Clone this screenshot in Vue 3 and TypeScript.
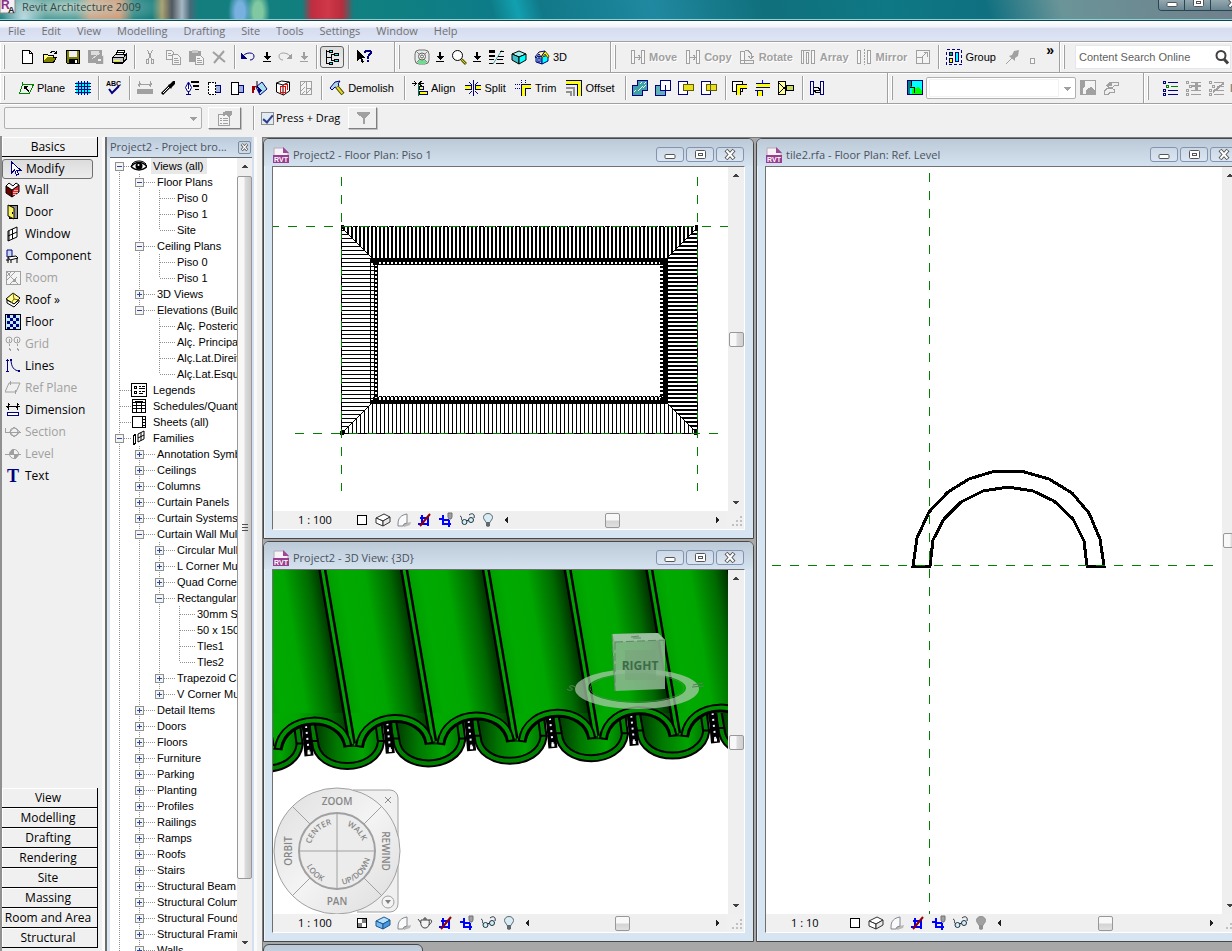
<script setup lang="ts">
import { h, ref, type FunctionalComponent } from 'vue'

const K = '#000000'
const G = '#a0a0a0'
const N = '#000080'
const Y = '#ffff00'
const C = '#00ffff'
const line = (d: string, c = K, w = 1) => `<path d="${d}" fill="none" stroke="${c}" stroke-width="${w}"/>`
const fill = (d: string, c: string, s = 'none') => `<path d="${d}" fill="${c}" stroke="${s}"/>`
const smooth = (s: string) => `<g shape-rendering="auto">${s}</g>`

const cropMarks = line('M1 11.5h10M4.5 3v9M3 5.5h9M10.5 4v10', '#0000ff', 2)
const bracket = fill('M1.5 1.5h3v13h-3zM11.5 1.5h3v13h-3z', '#f8f8f8', G)
const box3d = (a: string, b: string, c: string, s = '#333333') =>
  smooth(fill('M1 6l8-4 6 3-7 4z', a, s) + fill('M1 6v5l7 3V9z', b, s) + fill('M8 9v5l7-4V5z', c, s))
const bulb = (a: string, s: string) =>
  smooth(fill('M8 1.5c3 0 4.500 2 4.500 4 0 2-2 3-2.500 5h-4c-.5-2-2.500-3-2.500-5 0-2 1.500-4 4.500-4z', a, s) + fill('M6 11h4v3l-2 1-2-1z', s))
const list = (a: string, b: string) =>
  line('M5 2.500h10M8 6.500h7M5 10.500h10M5 14.500h10', a) + line('M.5 1.500h2v2h-2zM3.500 5.500h2v2h-2zM.5 13.500h2v2h-2zM.5 9.500h2v2h-2z', b)

const icons: Record<string, string> = {
  new: fill('M3.5 1.5h7l3 3v10h-10z', '#ffffff', K) + line('M10.5 1.5v3h3'),
  open: fill('M1.5 13.5v-8h4l1 1h5v2h3l-3 5z', '#808000', K) + fill('M2 6h3l1 1h5v1H5l-3 4z', '#ffff80') + line('M8.500 3.500l2-1h2l2 2m0-3v3h-3'),
  save: fill('M1.5 1.5h13v13h-12l-1-1z', '#808000', K) + fill('M4 2h8v6H4z', '#f0f0f0') + fill('M4 10h9v5H4z', K) + fill('M10 11h2v3h-2z', '#ffffff'),
  saveas: fill('M.5 1.5h13v12h-13z', G, G) + fill('M3 2h8v4H3z', '#dcdcdc') + line('M4 10l8-6M8 14.500h7v-9', '#dcdcdc') + fill('M8 7h7v8H8z', G) + fill('M10 10h3v2h-3z', '#eeeeee'),
  print: fill('M5 6l2-5h7l-2 5z', '#ffffff', K) + fill('M1.5 8.500l3-3h10l-2 3z', '#dddddd', K) + fill('M1.500 8.500h11v5h-11zM12.500 8.500l2.500-3v5l-2.500 3z', '#c8c8c8', K) + line('M3 11.500h6', Y) + line('M7 3.500h5M3 14.500h9'),
  cut: line('M5.500 1l4 9M10.500 1l-4 9', G) + line('M4.500 10.500h2v4h-2zM9.500 10.500h2v4h-2z', G),
  copy: fill('M1.500 1.500h5l2 2v7h-7z', '#f4f4f4', G) + fill('M7.500 5.500h5l3 3v7h-8z', '#f4f4f4', G) + line('M3 4.500h3M3 6.500h4M9 9.500h4M9 11.500h5M9 13.500h5', G),
  paste: fill('M1 2h12v11H1z', G) + fill('M4 1h6v3H4z', '#c8c8c8') + fill('M7.500 6.500h5l3 3v6h-8z', '#f4f4f4', G) + line('M9 9.500h3M9 11.500h5M9 13.500h5', G),
  del: smooth(line('M2 3l12 10M13 2L3 14', G, 2)),
  undo: smooth(line('M3 7c3-4 11-4 11 0 0 2-1 4-4 4', N, 1)) + fill('M1 4v6h6z', N),
  redo: smooth(line('M13 7c-3-4-11-4-11 0 0 2 1 4 4 4', G, 1)) + fill('M15 4v6H9z', G),
  dl: fill('M7 3h2v4h3l-4 4-4-4h3zM4 12h8v1H4z', K),
  dlg: fill('M7 3h2v4h3l-4 4-4-4h3zM4 12h8v1H4z', G),
  tree: line('M2.500 1v14M2 2.500h4M2 14.500h4M2 8.500h5v-3h3M7 8v3.500h3') + fill('M5.500 1.500h3v2h-3zM10.500 4.500h4v2h-4zM10.500 10.500h4v2h-4zM5.500 13.500h3v2h-3z', C, K),
  help: fill('M1 1v11l3-3 2 5 2-1-2-4h4z', K) + line('M9 4V2.500L10 1.500h3l1.500 1v2L12 7.500v2M12 11v2', N, 2),
  wheel: smooth(`<rect x="1" y="1" width="14" height="14" rx="4" fill="#e8ece8" stroke="#707070"/>` + fill('M3 13c2-3 8-3 10 0l-2 2H5z', '#70dc90') + line('M2 2l12 12M14 2L2 14', '#888888') + `<circle cx="8" cy="7.500" r="3.500" fill="#f4f4f4" stroke="#606060"/><circle cx="8" cy="7.500" r="1.500" fill="none" stroke="#606060"/>`),
  zoom: smooth(`<circle cx="6.500" cy="6.500" r="5" fill="#fff" stroke="#000"/>` + line('M10.500 10.500l4.500 4.500', '#606000', 3) + line('M10.500 10.500l4 4', '#e0d040', 1)),
  lines: fill('M1 1h6v3H1zM1 6h6v2H1zM1 10h5v1H1zM1 14h4v1H1z', K) + smooth(line('M14 1L5 15', '#40a0a0')) + line('M12 2.500h4M10 7.500h6M9 10.500h6M8 14.500h8'),
  cube: smooth(fill('M1 5l7-3 7 3-7 3z', '#a0f0f0', K) + fill('M1 5v6l7 4V8z', '#40c0c8', K) + fill('M8 8v7l7-4V5z', C, K)),
  house: smooth(fill('M2 7v6l6 2V8z', '#80d8f0', N) + fill('M8 8v7l6-3V6z', C, N) + fill('M7 8l4-6 4 5-1 2-3-4-3 4z', Y, '#605000') + fill('M1 8l4-5 6-1-4 6-2-3-3 4z', '#fff8a0', N) + fill('M4 9h2v4H4z', '#ffffff', N)),
  move: bracket + line('M5 8.500h5M8.500 6l2 2.500-2 2.500', G),
  copyx: bracket + line('M5 8.500h5M8.500 6l2 2.500-2 2.500', G),
  rotate: fill('M1.500 2.500h4v12h-4z', '#f8f8f8', G) + line('M1.500 11.500h13v3h-13M6 1.500h3l3 3v5M9.500 7l2.500 3 2.500-3', G),
  array: fill('M1.500 1.500h2v13h-2zM6.500 3.500h2v11h-2zM11.500 1.500h3v13h-3z', '#f8f8f8', G) + line('M4 1.500h6', G),
  mirror: bracket + `<path d="M8 0v16" stroke="${G}" stroke-dasharray="2 1"/>`,
  resize: fill('M1.500 1.500h13v13h-13z', '#f4f4f4', G) + line('M2 8.500h5.500V14M7 8l5-5M8.500 3.500h4v4', G),
  group: `<rect x=".5" y=".5" width="15" height="15" fill="none" stroke="${N}" stroke-dasharray="3 2"/>` + fill('M3.500 3.500h3v3h-3z', '#00c000', N) + fill('M3.500 9.500h3v4h-3z', Y, N) + fill('M9.500 3.500h3v9h-3z', C, N),
  pin: smooth(line('M1 15l6-6', G) + fill('M9 2l5-1-1 6-3 2v3L4 7l3-1z', G)),
  sq: fill('M6.500 9.500h4v5h-4z', '#f8f8f8', G),
  plane: line('M4.500 4.500h11l-4 9H1.500zM4 2v4', '#008000') + fill('M6 6h4l-1.500 1.500L11 11l-1 1-3-3.500L6 10z', K),
  gridb: fill('M1 2h14v12H1z', C) + line('M3.500 1v14M6.500 1v14M9.500 1v14M12.500 1v14M0 3.500h16M0 6.500h16M0 9.500h16M0 12.500h16', N),
  abc: `<text x="0" y="5.500" font-family="Liberation Sans, sans-serif" font-size="7" font-weight="bold" fill="#000">ABC</text>` + smooth(line('M3 9l3 4 7-7', N, 2)),
  dimg: line('M2.500 1v6M13.500 1v6M1 4.500h14M4 3L1 6M15 3l-3 3', G) + fill('M0 9h16v5H0z', G),
  dropper: smooth(line('M2 14l8-8', K, 3) + line('M3 13l6-6', '#ffffff', 1) + fill('M8 5l2-1 3-3h2v3l-3 3-1 2z', K)),
  pen: smooth(fill('M2.500 7.500L5.500 2l3 5.500-2 4h-2z', '#ffffff', N) + line('M5.500 3v6', N)) + line('M3 14.500h5M5.500 12v3', N) + fill('M8 1h8v2H8zM10 5h6v2h-6zM12 9h4v1h-4z', K),
  wallA: fill('M9.500 5.500h5v7h-5z', '#a0b0e0', N) + `<path d="M2.500 2.500h7v12h-7z" fill="#fff" stroke="#000" stroke-dasharray="2 1"/>`,
  wallB: fill('M9.500 5.500h5v7h-5z', '#a0b0e0', N) + fill('M2.500 2.500h7v12h-7z', '#ffffff', K),
  paint: smooth(fill('M4 7l6-5 5 7-7 6z', '#a8e0e8', N) + line('M5 1v6', K)) + fill('M0 6h5v1H3l-1 6H0z', '#a00000') + fill('M5 6l5 4-3 4z', N),
  wallC: smooth(fill('M1.500 3l5-2 8 1v9l-6 4-7-3z', '#ffffff', K) + line('M1 3l7 2 6-3M8 5v10', K)) + line('M5 6.500h5v6H5zM9 4.500h3v5', '#ff0000'),
  demog: fill('M2.500 1.500h11v13h-11z', '#f4f4f4', G) + line('M8.500 1v14M3 6l4-4M3 11l4-4M3 15l4-4M9 8h4M13 9l-4 4', G),
  hammer: smooth(fill('M1 8L6 2l5-1-2 3 1 1-2 3-2-1-3 3z', '#b0d8e0', N) + line('M8 7l6 7', '#404000', 4) + line('M8 7l5.500 6.500', '#e8d820', 2)),
  align: line('M0 3.500h4M7 3.500h5M2 1l2.500 2.500L2 6M9.500 1L7 3.500 9.500 6') + line('M6.500 4v12', '#008000') + fill('M7 6h4v3H7z', Y, N) + fill('M7 11.500h8v3H7z', Y, N),
  split: fill('M0 6h6v3H0zM10 6h6v3h-6z', Y) + line('M0 5.500h6v4H0M16 5.500h-6v4h6', N) + line('M8.500 0v16M4 2l3 3M13 2l-3 3M4 14l3-3M13 14l-3-3', N),
  trim: fill('M7 5h9v3h-6v8H7z', Y) + line('M16 4.500H6.500V16M16 8.500h-5.500V16', N) + `<path d="M0 4.500h6M0 8.500h6M6.500 0v4M10.500 0v4" stroke="${N}" stroke-dasharray="1 1"/>`,
  offset: fill('M0 1h15v15h-3V4H0z', Y) + line('M0 .5h15.500V16M0 4.500h11.500V16', N) + line('M0 7.500h8V16M0 11.500h4.500V16', '#909090', 2),
  join: fill('M5.500 .5h10v10h-5v5h-10v-10h5z', '#40a0a8', N) + line('M6 11l5-5M8 4l2-2M2 12l2-2M11 8l3-3M12 4l2-2', '#e0ffff'),
  unjoin: fill('M.5 5.500h10v10h-10z', '#60b0b8', N) + fill('M5.500 .5h10v10h-10z', '#ffffff', N) + line('M5 10.500h5.500V5', N),
  cutg: fill('M.5 1.500h9v13h-9z', '#ffffff', N) + fill('M5.500 4.500h10v6h-10z', '#e8e020', '#606000'),
  uncut: fill('M.5 1.500h9v13h-9z', '#ffffff', N) + fill('M5.500 4.500h10v6h-10z', '#e8e020', '#606000') + line('M9.500 5v6', '#606000'),
  wj: fill('M.5 1.500h10v10h-10z', '#ffffff', K) + fill('M5 5h10v3H8v7H5z', Y) + line('M15 4.500H4.500V15M15 8.500H8.500V15', K),
  sf: fill('M2 4h13v3H2zM3 11h4v5H3z', Y) + line('M1 3.500h14M1 7.500h14M2.500 10v6M7.500 10v6M0 10.500h8', N) + line('M7.500 0v4', '#0000ff'),
  bc: fill('M.5 1.500h7v13h-7z', '#ffffa0', K) + fill('M8.500 5.500h7v5h-7z', '#c8d860', K) + line('M1 3l8 8M1 13l8-8'),
  ref: fill('M1.500 1.500h3v13h-3zM11.500 1.500h3v13h-3z', '#f8f8f8', N) + line('M5 7.500h4l2 2M11 12.500H7l-2-2M4 10.500h8'),
  img: fill('M.5 .5h15v14H.5z', C, N) + fill('M1 1h4v5l-2 2v6H1z', '#008080') + fill('M5 14V9l3-2 1 2 2-3 4 5v3z', '#00ff00') + line('M4.500 1v5M3 7.500h4V13', K),
  imgg: fill('M.5 .5h15v14H.5z', '#f4f4f4', G) + fill('M1 1h4v5l-2 2v6H1zM6 14v-4l3-2 2-2 4 5v3z', G),
  hands: line('M4 5.500l3-3h8v3h-3l-3 2H6zM1 11.500l3-3h5l2 1v3H7l-2 2H1z', G) + fill('M5 3h4v3H5z', G),
  list1: list(N, N) + line('M8 6.500h7M3.500 5.500h2v2h-2z', '#008000'),
  list2: list(G, G) + fill('M9 2h3v3h3v2h-3v3H9V7H6V5h3z', G),
  list3: list(G, G) + line('M4 12L15 3', G, 2),
  props: fill('M1.500 4.500h11v11h-11z', '#f4f4f4', G) + fill('M6 2l4-1h5v4l-4 2-2-2-3 1z', G) + line('M3 8.500h2M6 8.500h5M3 10.500h2M6 10.500h5M3 13.500h2M6 13.500h5', G),
  funnel: fill('M2 2h13v2l-5 4v6H8V8L2 4z', G),
  search: smooth(`<circle cx="7" cy="6.500" r="4.500" fill="none" stroke="#404040" stroke-width="2"/>` + line('M10 10l4 4.500', '#404040', 3)),
  modify: fill('M5.500 1v11l3-3 2 5 2-1-2-4h4z', '#ffffff', N),
  wall: smooth(fill('M1 4l6 4v7L1 11z', '#700000', K) + fill('M7 8l7-5v7l-7 5z', '#e03030', K) + fill('M1 4l3-3 4 3 3-3 3 2-7 5z', '#ffffff', K)) + line('M8 10.500h5M8 12.500h3M9 8.500h4', '#ffb0b0'),
  door: fill('M4.500 1.500h8v13h-8z', '#909090', K) + smooth(fill('M3 1l6 3v11l-6-3z', '#f8f060', K)) + fill('M7 8h1v2H7z', K),
  window: smooth(fill('M3 5l9-4v10l-9 4z', '#ffffff', K) + line('M7.500 3v10M3 10l9-4M4 5v10', K)),
  component: smooth(fill('M2 2h5v7H2z', '#c8d8f8', N) + fill('M3 9l8-1 2 2-8 2z', '#ffffff', K) + line('M3 10v5M12 10v5M6 12v3M1 12h3', K)),
  room: fill('M1.500 1.500h14v13h-14z', '#f4f4f4', G) + line('M2 6l5-5M2 10l8-8M3 4l10 10M5 14l7-7M2 2l3 3', G) + fill('M8 9h3v3H8z', G),
  roof: smooth(fill('M1 7l7-6 7 5-6 6z', '#ffff90', K) + fill('M2 8l7 4 5-4v2l-5 5-7-4z', '#ffffff', K) + line('M8 1l1 6-3 4M9 7l5 1', '#806000')),
  floor: fill('M.5 .5h15v15H.5z', '#c0ecff', N) + `<path d="M3 1v14M9 1v14" stroke="${N}" stroke-width="3" stroke-dasharray="3 3"/><path d="M6 1v14M12 1v14" stroke="${N}" stroke-width="3" stroke-dasharray="3 3" stroke-dashoffset="3"/>` + line('M.5 .5h15v15H.5z', K),
  grid: smooth(`<circle cx="4" cy="4" r="3" fill="none" stroke="${G}"/><circle cx="12" cy="4" r="3" fill="none" stroke="${G}"/>`) + line('M4.500 3v3M12.500 3v3M4.500 8v2M12.500 8v2M4.500 12l1 3M12.500 12l1 3', G),
  linesb: line('M2.500 1v13M1 2.500h3M1 13.500h3', N) + smooth(line('M6 1c0 8 3 12 9 12', N)) + fill('M5 1h2v2H5zM13 12h2v2h-2z', N),
  refplane: smooth(line('M4 3h11l-4 9H0z', G)) + line('M5.500 1v4M10.500 10v4', G),
  dimension: line('M3.500 1v7M12.500 1v7M1 4.500h14M5 2L2 6M14 2l-3 4') + fill('M2.500 10.500h11v3h-11z', '#ffffff', N),
  section: smooth(`<circle cx="9" cy="8" r="4" fill="none" stroke="${G}"/>` + line('M5 8l4-5 6 5-6 5z', G)) + line('M0 4v4.500h16', G),
  level: smooth(`<circle cx="9" cy="8" r="4.500" fill="#f4f4f4" stroke="${G}"/>`) + fill('M9 3v5H5c0-3 2-5 4-5zM9 13V8h4c0 3-2 5-4 5z', G) + line('M0 8.500h16', G),
  text: `<text x="8" y="14" text-anchor="middle" font-family="Liberation Serif, serif" font-size="18" font-weight="bold" fill="${N}">T</text>`,
  eye: smooth(line('M0 8.500C4 3 12 3 16 8.500 12 13 4 13 0 8.500', K, 1.500) + `<circle cx="8" cy="8" r="3.500" fill="#000"/><circle cx="7.500" cy="7" r="1" fill="#fff"/>` + line('M1 6c3-4 11-4 14 0', K)),
  legends: fill('M.5 1.500h15v13H.5z', '#ffffff', K) + line('M3.500 4.500h2v2h-2zM3.500 9.500h2v2h-2zM8 4.500h2M11 4.500h3M8 6.500h6M8 9.500h2M11 9.500h3M8 11.500h4'),
  schedules: fill('M1.500 1.500h13v13h-13z', '#ffffff', K) + line('M1 4.500h14M1 7.500h14M1 10.500h14M5.500 5v10M10.500 5v10M4 3h8'),
  sheets: fill('M1.500 2.500h13v11h-13z', '#ffffff', K) + line('M11.500 3v10') + line('M12 5.500h2M12 8.500h2M12 11.500h2'),
  families: fill('M2.500 5.500l2-1v9l-2 1z', '#ffffff', K) + smooth(fill('M7 4l6-3v8l-6 3z', '#ffffff', K) + line('M10 2.500v8M7 8l6-3')),
  rvt: smooth(fill('M1 1h10l4 4v11H1z', '#f6f2f6', '#b8a8b8') + fill('M10 0l6 6h-6z', '#a04898') + fill('M0 8h16v8H0z', '#9a3c90') + `<text x="8" y="14.500" text-anchor="middle" font-family="Liberation Sans, sans-serif" font-size="7" font-weight="bold" fill="#fff">RVT</text>`),
  revit: smooth(fill('M0 0h15v15H0z', '#f4f0f4', '#888888') + `<text x="1" y="11" font-family="Liberation Sans, sans-serif" font-size="12" font-weight="bold" fill="#8c2f86">R</text><text x="8" y="15" font-family="Liberation Sans, sans-serif" font-size="9" font-weight="bold" fill="#222">A</text>`),
  blank: fill('M3.500 3.500h9v9h-9z', '#ffffff', K),
  checker: fill('M3.500 3.500h9v9h-9z', '#ffffff', K) + fill('M8 4h4v4H8zM4 8h4v4H4z', '#808080'),
  boxw: box3d('#ffffff', '#ffffff', '#e8e8e8'),
  boxb: box3d('#b8e0ff', '#78b8f0', '#4898e0', '#185890'),
  shadow: smooth(fill('M6 12l9-2-1 3-6 2z', '#b8b8b8') + fill('M2 12c0-6 3-9 9-10v9l-3 1-1 2H2z', '#fafafa', '#808890')),
  crop: cropMarks + smooth(line('M13 2L3 14', '#900000', 2)),
  croph: line('M1 6.500h4M4.500 3v9h8M5 7.500h6M10.500 8v7', '#0000ff', 2) + smooth(fill('M10 1h4v4l-1 2h-2l-1-2z', '#a0a0a0', '#707070')),
  glasses: smooth(line('M1 4c3 1 0 4 3 5M10 3c4-3 6 0 5 3', '#203040', 1) + `<circle cx="5.500" cy="10" r="2.500" fill="#d0f0f8" stroke="#203040"/><circle cx="12" cy="8" r="2.500" fill="#d0f0f8" stroke="#203040"/>` + line('M7.500 9l2-1', '#203040')),
  teapot: smooth(fill('M4 5h8c1 5-1 8-4 8S3 10 4 5z', '#f4f4f4', '#404040') + line('M4 8L1 4M12 5c3-1 4 2 0 5M6 4h4M8 2v2', '#404040')),
  bulb: bulb('#d8ecf4', '#606870'),
  bulbg: bulb('#a0a0a0', '#909090'),
  min: smooth(`<rect x="3" y="7.500" width="10" height="4" rx="1" fill="#fff" stroke="#555"/>`),
  max: smooth(`<rect x="3.500" y="3.500" width="10" height="8" rx="1" fill="#fff" stroke="#555"/><rect x="6.500" y="6.500" width="4" height="2" fill="#fff" stroke="#555"/>`),
  close: smooth(line('M4 3l8 9M12 3l-8 9', '#555555', 4) + line('M4.500 3.500l7 8M11.500 3.500l-7 8', '#ffffff', 2)),
  restore: smooth(`<rect x="5.500" y="2.500" width="7" height="6" fill="#fff" stroke="#555"/><rect x="3.500" y="5.500" width="7" height="6" fill="#fff" stroke="#555"/>`),
  up: fill('M8 6l4 4H4z', '#404040'),
  down: fill('M8 10l4-4H4z', '#404040'),
  downg: fill('M8 11l4-4H4z', G),
  left: fill('M6 8l4-4v8z', '#202020'),
  right: fill('M10 8L6 4v8z', '#202020'),
  sizegrip: fill('M12 4h2v2h-2zM12 8h2v2h-2zM12 12h2v2h-2zM8 8h2v2H8zM8 12h2v2H8zM4 12h2v2H4z', '#c0c0c0'),
}

const Ico: FunctionalComponent<{ name: string }> = (p) =>
  h('svg', { class: 'ico', viewBox: '0 0 16 16', 'shape-rendering': 'crispEdges', 'aria-hidden': 'true', innerHTML: icons[p.name] })
Ico.props = ['name']

interface Tool { i?: string; t?: string; n?: string; k?: 'sep' | 'slim' | 'mid' | 'on'; off?: boolean }
const sep: Tool = { k: 'sep' }
const fileTools: Tool[] = [
  { i: 'new', n: 'New' }, { i: 'open', n: 'Open' }, { i: 'save', n: 'Save' }, { i: 'saveas', n: 'Save to central', off: true }, { i: 'print', n: 'Print' }, sep,
  { i: 'cut', n: 'Cut', off: true }, { i: 'copy', n: 'Copy to clipboard', off: true }, { i: 'paste', n: 'Paste', off: true }, { i: 'del', n: 'Delete', off: true }, sep,
  { i: 'undo', n: 'Undo', k: 'mid' }, { i: 'dl', n: 'Undo list', k: 'slim' }, { i: 'redo', n: 'Redo', k: 'mid', off: true }, { i: 'dlg', n: 'Redo list', k: 'slim', off: true }, sep,
  { i: 'tree', n: 'Project browser', k: 'on' }, sep, { i: 'help', n: 'Help pointer' },
]
const viewTools: Tool[] = [
  { i: 'wheel', n: 'Steering wheel' }, { i: 'dl', n: 'Wheel list', k: 'slim' }, { i: 'zoom', n: 'Zoom' }, { i: 'dl', n: 'Zoom list', k: 'slim' },
  { i: 'lines', n: 'Thin lines' }, { i: 'cube', n: 'Shading' }, { i: 'house', t: '3D' },
]
const editTools: Tool[] = [
  { i: 'move', t: 'Move', off: true }, { i: 'copyx', t: 'Copy', off: true }, { i: 'rotate', t: 'Rotate', off: true }, { i: 'array', t: 'Array', off: true },
  { i: 'mirror', t: 'Mirror', off: true }, { i: 'resize', n: 'Resize', off: true }, sep, { i: 'group', t: 'Group' }, { i: 'pin', n: 'Pin', off: true }, { i: 'sq', n: 'More', k: 'slim', off: true },
]
const modelTools: Tool[] = [
  { i: 'plane', t: 'Plane' }, { i: 'gridb', n: 'Work plane grid' }, sep, { i: 'abc', n: 'Spelling' }, sep,
  { i: 'dimg', n: 'Dimension', off: true }, { i: 'dropper', n: 'Match type' }, { i: 'pen', n: 'Linework' }, { i: 'wallA', n: 'Hide face' }, { i: 'wallB', n: 'Show face' },
  { i: 'paint', n: 'Paint' }, { i: 'wallC', n: 'Split face' }, { i: 'demog', n: 'Phase', off: true }, sep, { i: 'hammer', t: 'Demolish' }, sep,
  { i: 'align', t: 'Align' }, { i: 'split', t: 'Split' }, { i: 'trim', t: 'Trim' }, { i: 'offset', t: 'Offset' }, sep,
  { i: 'join', n: 'Join' }, { i: 'unjoin', n: 'Unjoin' }, { i: 'cutg', n: 'Cut geometry' }, { i: 'uncut', n: 'Uncut geometry' }, sep,
  { i: 'wj', n: 'Wall joins' }, { i: 'sf', n: 'Split wall' }, { i: 'bc', n: 'Beam joins' }, sep, { i: 'ref', n: 'Attach' },
]
const listTools: Tool[] = [{ i: 'list1', n: 'Option set' }, { i: 'list2', n: 'Add to set', off: true }, { i: 'list3', n: 'Pick option', off: true }]

const menus = ['File', 'Edit', 'View', 'Modelling', 'Drafting', 'Site', 'Tools', 'Settings', 'Window', 'Help']
const basics = [
  { i: 'modify', t: 'Modify', on: true }, { i: 'wall', t: 'Wall' }, { i: 'door', t: 'Door' }, { i: 'window', t: 'Window' }, { i: 'component', t: 'Component' },
  { i: 'room', t: 'Room', off: true }, { i: 'roof', t: 'Roof »' }, { i: 'floor', t: 'Floor' }, { i: 'grid', t: 'Grid', off: true }, { i: 'linesb', t: 'Lines' },
  { i: 'refplane', t: 'Ref Plane', off: true }, { i: 'dimension', t: 'Dimension' }, { i: 'section', t: 'Section', off: true }, { i: 'level', t: 'Level', off: true }, { i: 'text', t: 'Text' },
]
const tabs = ['View', 'Modelling', 'Drafting', 'Rendering', 'Site', 'Massing', 'Room and Area', 'Structural']

type Node = [depth: number, label: string, box?: '+' | '-', icon?: string]
const plus = (labels: string[]): Node[] => labels.map((l) => [1, l, '+'])
const nodes: Node[] = [
  [0, 'Views (all)', '-', 'eye'], [1, 'Floor Plans', '-'], [2, 'Piso 0'], [2, 'Piso 1'], [2, 'Site'], [1, 'Ceiling Plans', '-'], [2, 'Piso 0'], [2, 'Piso 1'],
  [1, '3D Views', '+'], [1, 'Elevations (Building Elevation)', '-'], [2, 'Alç. Posterior'], [2, 'Alç. Principal'], [2, 'Alç.Lat.Direito'], [2, 'Alç.Lat.Esquerdo'],
  [0, 'Legends', undefined, 'legends'], [0, 'Schedules/Quantities', undefined, 'schedules'], [0, 'Sheets (all)', undefined, 'sheets'], [0, 'Families', '-', 'families'],
  ...plus(['Annotation Symbols', 'Ceilings', 'Columns', 'Curtain Panels', 'Curtain Systems']),
  [1, 'Curtain Wall Mullions', '-'], [2, 'Circular Mullion', '+'], [2, 'L Corner Mullion', '+'], [2, 'Quad Corner Mullion', '+'], [2, 'Rectangular Mullion', '-'],
  [3, '30mm Square'], [3, '50 x 150mm'], [3, 'Tles1'], [3, 'Tles2'], [2, 'Trapezoid Corner', '+'], [2, 'V Corner Mullion', '+'],
  ...plus(['Detail Items', 'Doors', 'Floors', 'Furniture', 'Parking', 'Planting', 'Profiles', 'Railings', 'Ramps', 'Roofs', 'Stairs', 'Structural Beam', 'Structural Columns', 'Structural Foundations', 'Structural Framing', 'Walls']),
]
const hasNext = (i: number, d: number) => {
  for (let j = i + 1; j < nodes.length; j++) {
    if (nodes[j][0] < d) return false
    if (nodes[j][0] === d) return true
  }
  return d < 2
}
const tree = nodes.map(([depth, label, box, icon], i) => {
  let guides = ''
  for (let k = 0; k < depth; k++) if (hasNext(i, k)) guides += `M${9.5 + 20 * k} 0V16`
  const x = 9.5 + 20 * depth
  guides += `M${x} ${i === 0 ? 8 : 0}V${hasNext(i, depth) ? 16 : 8}M${x} 8.5H${depth ? x + 15 : x + 11}`
  return { label, box, icon, guides, bx: 5 + 20 * depth, w: depth ? 20 * depth + 27 : 21 }
})

const common = ['shadow', 'crop', 'croph', 'glasses']
const columns = [
  [
    { kind: 'plan', title: 'Project2 - Floor Plan: Piso 1', scale: '1 : 100', tools: ['blank', 'boxw', ...common, 'bulb'] },
    { kind: 'view3d', title: 'Project2 - 3D View: {3D}', scale: '1 : 100', tools: ['checker', 'boxb', 'shadow', 'teapot', 'crop', 'croph', 'glasses', 'bulb'] },
  ],
  [{ kind: 'tile', title: 'tile2.rfa - Floor Plan: Ref. Level', scale: '1 : 10', tools: ['blank', 'boxw', ...common, 'bulbg'] }],
]

/* Roof plan: hatch lines of the four slopes, mitred at the corners. */
const roof = { l: 68, r: 425, t: 60, b: 267, d: 31 }
let north = '', south = '', west = '', east = ''
for (let x = roof.l + 3; x < roof.r; x += 4) {
  const len = Math.min(roof.d, x - roof.l, roof.r - x)
  north += `M${x} ${roof.t}v${len}`
  south += `M${x + 0.5} ${roof.b}v${-len}`
}
for (let y = roof.t + 3; y < roof.b; y += 4) {
  const len = Math.min(roof.d, y - roof.t, roof.b - y)
  west += `M${roof.l} ${y + 0.5}h${len}`
  east += `M${roof.r} ${y}h${-len}`
}
const bays = [-1, 0, 1, 2, 3, 4, 5, 6]
const bayShift = (i: number) => `translate(${(i * 81.3).toFixed(1)} ${(i * -2.6).toFixed(1)})`
const pressDrag = ref(true)
</script>

<template>
  <div class="app">
    <header class="caption">
      <Ico name="revit" />
      <span class="app-name">Revit Architecture 2009</span>
      <div class="sysbtns">
        <button aria-label="Minimise"><Ico name="min" /></button>
        <button aria-label="Maximise"><Ico name="max" /></button>
        <button class="wide" aria-label="Close"><Ico name="close" /></button>
      </div>
    </header>
    <nav class="menubar"><button v-for="m in menus" :key="m">{{ m }}</button></nav>

    <div class="row">
      <div v-for="(band, b) in [fileTools, viewTools, editTools]" :key="b" class="band" :class="'band' + b">
        <span class="grip"></span>
        <template v-for="(t, n) in band" :key="n">
          <span v-if="t.k === 'sep'" class="sep"></span>
          <button v-else class="tool" :class="[t.k, { labelled: t.t }]" :disabled="t.off" :aria-label="t.t ?? t.n">
            <span class="slot"><Ico :name="t.i!" /></span><span v-if="t.t" class="lbl">{{ t.t }}</span>
          </button>
        </template>
        <span v-if="b === 2" class="more">»</span>
      </div>
      <div class="band grow">
        <span class="grip"></span>
        <div class="search">
          <input type="text" aria-label="Content search" placeholder="Content Search Online" />
          <button aria-label="Search"><Ico name="search" /></button>
        </div>
      </div>
    </div>

    <div class="row">
      <div class="band band3">
        <span class="grip"></span>
        <template v-for="(t, n) in modelTools" :key="n">
          <span v-if="t.k === 'sep'" class="sep"></span>
          <button v-else class="tool" :class="{ labelled: t.t }" :disabled="t.off" :aria-label="t.t ?? t.n">
            <span class="slot"><Ico :name="t.i!" /></span><span v-if="t.t" class="lbl">{{ t.t }}</span>
          </button>
        </template>
      </div>
      <div class="band band4">
        <span class="grip"></span>
        <button class="tool" aria-label="Design options"><span class="slot"><Ico name="img" /></span></button>
        <div class="combo mid-combo"><select disabled aria-label="Active option"></select><Ico name="downg" /></div>
        <button class="tool" disabled aria-label="Edit option"><span class="slot"><Ico name="imgg" /></span></button>
        <button class="tool" disabled aria-label="Exchange"><span class="slot"><Ico name="hands" /></span></button>
      </div>
      <div class="band grow">
        <span class="grip"></span>
        <button v-for="t in listTools" :key="t.i" class="tool" :disabled="t.off" :aria-label="t.n"><span class="slot"><Ico :name="t.i!" /></span></button>
        <span class="cutlbl">Edit</span>
      </div>
    </div>

    <div class="options">
      <div class="combo type-combo"><select disabled aria-label="Type selector"></select><Ico name="downg" /></div>
      <button class="raised" disabled aria-label="Element properties"><Ico name="props" /></button>
      <span class="sep"></span>
      <label class="check"><input v-model="pressDrag" type="checkbox" />Press + Drag</label>
      <button class="raised thin" disabled aria-label="Filter"><Ico name="funnel" /></button>
    </div>

    <main class="body">
      <aside class="design">
        <button class="tab first">Basics</button>
        <button v-for="b in basics" :key="b.t" class="item" :class="{ on: b.on }" :disabled="b.off"><Ico :name="b.i" />{{ b.t }}</button>
        <div class="tabs"><button v-for="t in tabs" :key="t" class="tab">{{ t }}</button></div>
      </aside>

      <section class="browser">
        <div class="browser-head"><span>Project2 - Project bro...</span><button aria-label="Close browser"><Ico name="close" /></button></div>
        <div class="browser-body">
          <ul class="tree">
            <li v-for="(n, i) in tree" :key="i" :class="{ sel: i === 0 }">
              <svg :width="n.w" height="16" shape-rendering="crispEdges" aria-hidden="true">
                <path :d="n.guides" stroke="#909090" stroke-dasharray="1 1" fill="none" />
                <template v-if="n.box">
                  <rect :x="n.bx + 0.5" y="4.5" width="8" height="8" fill="#f4f4f4" stroke="#909090" />
                  <path :d="`M${n.bx + 2} 8.5h5` + (n.box === '+' ? `m-2.500 -2.500v5` : '')" stroke="#2a4a9a" fill="none" />
                </template>
              </svg>
              <Ico v-if="n.icon" :name="n.icon" /><span :class="{ iconic: n.icon }">{{ n.label }}</span>
            </li>
          </ul>
          <div class="vscroll tall"><Ico name="up" /><i class="before"></i><b></b><i class="after"></i><Ico name="down" /></div>
        </div>
      </section>

      <div class="mdi">
        <div v-for="(col, c) in columns" :key="c" class="column" :class="'column' + c">
          <article v-for="w in col" :key="w.kind" class="win">
            <header class="win-head">
              <Ico name="rvt" /><h2>{{ w.title }}</h2>
              <button aria-label="Minimise"><Ico name="min" /></button>
              <button aria-label="Maximise"><Ico name="max" /></button>
              <button aria-label="Close"><Ico name="close" /></button>
            </header>
            <div class="client">
              <div class="canvas">
                <svg v-if="w.kind === 'plan'" class="drawing" shape-rendering="crispEdges">
                  <g fill="none" stroke="#000">
                    <path :d="north + east" stroke-width="2" />
                    <path :d="south + west" />
                    <path d="M68 59.500H425" stroke-dasharray="5 1" />
                    <path d="M68 266.500H425" stroke-dasharray="3 1" />
                    <path d="M68.500 60V267M424.500 60V267" />
                    <path d="M68 60l31 31M425 60l-31 31M68 267l31-31M425 267l-31-31" />
                    <path d="M97 93H395M97 235H395" stroke-width="4" />
                    <path d="M393 91V237" stroke-width="4" />
                    <path d="M97.500 91V237M101.500 91V237M104.500 91V237" />
                    <path d="M101 95V233" stroke-width="7" stroke-dasharray="1 3" />
                    <path d="M103.500 95V233M388 95V233" stroke-width="3" stroke-dasharray="2 2" />
                    <path d="M390.500 95V233" />
                    <path d="M100 96H392M100 231.500H392" stroke-width="3" stroke-dasharray="2 2" />
                    <path d="M102 97.500H390M102 229.500H390" stroke-dasharray="3 1" />
                    <path d="M68 58h3v4h-3zM422 58h3v4h-3zM67 264h4v4h-4zM421 264h4v4h-4z" fill="#000" stroke="none" />
                  </g>
                  <g stroke="#008000" stroke-dasharray="9 9">
                    <path d="M68.500 10V324M424.500 10V324M-3 59.500H455M22 266.500H445" />
                  </g>
                </svg>

                <svg v-else-if="w.kind === 'view3d'" class="drawing">
                  <defs>
                    <linearGradient id="slope"><stop offset="0" stop-color="#009a00" /><stop offset=".2" stop-color="#00aa00" /><stop offset=".5" stop-color="#00a600" /><stop offset=".8" stop-color="#006a00" /><stop offset="1" stop-color="#002800" /></linearGradient>
                    <linearGradient id="trough"><stop offset="0" stop-color="#003000" /><stop offset=".35" stop-color="#007800" /><stop offset=".7" stop-color="#00a400" /><stop offset="1" stop-color="#006000" /></linearGradient>
                    <linearGradient id="wheelFill" x1="0" y1="0" x2="1" y2="1"><stop offset="0" stop-color="#dedede" /><stop offset=".5" stop-color="#f4f4f4" /><stop offset="1" stop-color="#dcdcdc" /></linearGradient>
                    <path id="arcTop" d="M37 281A27 27 0 0 1 91 281" /><path id="arcLow" d="M30 281A34 34 0 0 0 98 281" />
                  </defs>
                  <g v-for="i in bays" :key="'u' + i" :transform="bayShift(i)">
                    <path d="M38 150L42 172C44 202 104 206 109 172L112 150z" fill="url(#trough)" />
                    <path d="M38 150L42 172C44 204 104 204 108 172L105 150" fill="none" stroke="#000" stroke-width="8" />
                    <path d="M38 150L42 172C44 204 104 204 108 172L105 150" fill="none" stroke="#008000" stroke-width="4" />
                    <path d="M37 171h8M104 171h8" stroke="#000" stroke-width="2" />
                    <path d="M33 152l3 34" stroke="#000" stroke-width="9" />
                    <path d="M33 156l3 28" stroke="#e8f4ff" stroke-width="2" stroke-dasharray="2 4" />
                    <path d="M34.500 183h3" stroke="#fff" stroke-width="3" />
                  </g>
                  <g v-for="i in bays" :key="'s' + i" :transform="bayShift(i)">
                    <path d="M-32 -30L50 -30L82 177L74 177C70 140 11 142 5 178L0 178z" fill="url(#slope)" />
                  </g>
                  <g><rect v-for="i in bays" :key="'g' + i" :x="i * 81.3 - 31.3" y="0" width="81.4" height="143" fill="url(#slope)" transform="skewX(9.500)" /></g>
                  <g v-for="i in bays" :key="'a' + i" :transform="bayShift(i)" fill="none">
                    <path d="M46 -20L79 174" stroke="#000" stroke-width="8" />
                    <path d="M46 -20L79 174" stroke="#00a000" stroke-width="3" />
                    <path d="M5 180C10 142 70 142 75 177" stroke="#000" stroke-width="9" />
                    <path d="M5 178C10 142 70 142 75 175" stroke="#009000" stroke-width="4" />
                  </g>
                  <g class="cube" aria-hidden="true">
                    <path fill-rule="evenodd" d="M302 119a62 20 0 1 0 124 0a62 20 0 1 0-124 0M315 118a49 15 0 1 0 98 0a49 15 0 1 0-98 0" fill="#b4ccb4" fill-opacity=".7" />
                    <path d="M317 118a47 14 0 1 0 94 0a47 14 0 1 0-94 0" fill="none" stroke="#4f8a55" stroke-opacity=".7" />
                    <path d="M302 117c-4-3-8 0-4 1s-1 4-4 1M420 115l10-2M419 117l12-1" fill="none" stroke="#5c7f60" />
                    <path d="M339 64L385 63L392 70L392 119L342 121z" fill="#8fb894" fill-opacity=".85" />
                    <path d="M339 64L385 63L392 70L342 72z" fill="#a4c4a8" fill-opacity=".8" />
                    <path d="M339 64L342 121M342 72L392 70M342 72V121M358 67l8-1 2 2-8 0z" fill="none" stroke="#5c8a62" stroke-dasharray="8 3" />
                    <rect x="352" y="80" width="31" height="30" fill="#78a47c" fill-opacity=".6" />
                    <text x="367" y="100" text-anchor="middle" class="face">RIGHT</text>
                  </g>
                  <g class="wheel" stroke="#a0a0a0" fill="none">
                    <path d="M80 220h37a8 8 0 0 1 8 8v106a8 8 0 0 1-8 8H84" fill="#f0f0f0" />
                    <circle cx="64" cy="281" r="63" fill="url(#wheelFill)" />
                    <circle cx="64" cy="281" r="38" fill="#ececec" stroke-width="2" />
                    <path d="M64 243v76M26 281h76" />
                    <path d="M37 254L19 236M91 254l18-18M37 308l-18 18M91 308l18 18" />
                    <path d="M112 227l6 6M118 227l-6 6" stroke="#888" />
                    <circle cx="115" cy="332" r="6" fill="#f4f4f4" /><path d="M112 330h6l-3 4z" fill="#808080" stroke="none" />
                    <g class="wheel-text">
                      <text x="64" y="235">ZOOM</text><text x="64" y="335">PAN</text>
                      <text transform="translate(19 281) rotate(-90)">ORBIT</text><text transform="translate(109 281) rotate(90)">REWIND</text>
                      <g class="small"><text><textPath href="#arcTop" startOffset="26%">CENTER</textPath></text><text><textPath href="#arcTop" startOffset="75%">WALK</textPath></text>
                        <text><textPath href="#arcLow" startOffset="25%">LOOK</textPath></text><text><textPath href="#arcLow" startOffset="74%">UP/DOWN</textPath></text></g>
                    </g>
                  </g>
                </svg>

                <svg v-else class="drawing" shape-rendering="crispEdges">
                  <path d="M147 399L151 371L163 345L182 325L203 312L229 304H255L283 312L306 326L323 346L334 372L338 399H321L318 374L307 352L288 334L267 324L242 320L217 324L195 335L178 352L167 373L164 399z" fill="none" stroke="#000" stroke-width="3" />
                  <path d="M163.500 6V747M6 398.500H448" stroke="#008000" stroke-dasharray="9 9" />
                </svg>
              </div>
              <div class="vscroll"><Ico name="up" /><i></i><b></b><i></i><Ico name="down" /></div>
              <footer class="viewbar">
                <span class="scale">{{ w.scale }}</span>
                <button v-for="t in w.tools" :key="t" :aria-label="t"><Ico :name="t" /></button>
                <div class="hscroll"><Ico name="left" /><i></i><b></b><i></i><Ico name="right" /></div>
                <Ico name="sizegrip" />
              </footer>
            </div>
          </article>
          <div class="dock">
            <header v-if="c === 0" class="win-head docked">
              <Ico name="rvt" /><h2>Project2</h2>
              <button aria-label="Restore"><Ico name="restore" /></button>
              <button aria-label="Maximise"><Ico name="max" /></button>
              <button aria-label="Close"><Ico name="close" /></button>
            </header>
          </div>
        </div>
      </div>
    </main>
  </div>
</template>

<style>
html, body { height: 100%; overflow: hidden; }
body { margin: 0; background: #f0f0f0; }
</style>

<style scoped>
* { box-sizing: border-box; }
.app { height: 100vh; display: flex; flex-direction: column; overflow: hidden; background: #f0f0f0; color: #000; font: 12px/16px "Open Sans", "Noto Sans", sans-serif; }
button { font: inherit; color: inherit; padding: 0; margin: 0; border: 0; background: none; display: flex; align-items: center; flex: none; white-space: nowrap; }
.ico { width: 16px; height: 16px; flex: none; display: block; }

.caption { flex: 0 0 21px; display: flex; align-items: flex-start; overflow: hidden; border-bottom: 1px solid #0c4650; box-shadow: inset 0 -1px #8fd0d4;
  background:
    radial-gradient(ellipse 100px 20px at 70px 7px, rgba(196, 220, 208, .9), transparent),
    radial-gradient(ellipse 22px 40px at 24px 20px, rgba(210, 230, 250, .9), transparent),
    linear-gradient(90deg, transparent 302px, #c02c40 312px, #d03848 328px, #b82c3c 342px, transparent 354px),
    radial-gradient(ellipse 12px 24px at 240px 12px, #78b0e0 40%, transparent),
    radial-gradient(ellipse 12px 24px at 258px 12px, #80c8a0 40%, transparent),
    linear-gradient(90deg, transparent 152px, #a8a070 162px, #505860 172px, #a8b8c4 182px, #486878 190px, transparent 198px),
    linear-gradient(90deg, transparent 76px, #d88860 90px, #d88860 120px, transparent 134px),
    linear-gradient(75deg, #1a7c7c 0, #108080 30%, #0e7c88 40%, #12a0b0 42%, #107888 44%, #2088a0 53%, #10707c 62%, #0e7884 72%, #0f7080 80%, #6a9498 86%, #70808c 100%); }
.caption .ico { margin-top: -2px; }
.app-name { margin: -1px 0 0 6px; color: #384848; flex: 1; }
.sysbtns { display: flex; margin-right: -24px; border: 1px solid #2c4450; border-top: 0; border-radius: 0 0 4px 4px; height: 11px; overflow: hidden; }
.sysbtns button { width: 26px; height: 12px; justify-content: center; align-items: flex-end; border-right: 1px solid #2c4450; background: linear-gradient(#94a8b0, #5f7e8c); }
.sysbtns .ico { margin-bottom: 1px; }
.sysbtns .wide { width: 44px; }

.app-name, .menubar, .browser-head, .win-head { font-size: 11px; }
.menubar { flex: 0 0 21px; display: flex; padding-bottom: 1px; background: linear-gradient(#fff, #f0f3fa 30%, #d6ddf0 38%, #dee5f5); border-bottom: 1px solid #a0a0a0; color: #707070; }
.menubar button { padding: 0 8px; }

.row { flex: 0 0 31px; display: flex; border-bottom: 1px solid #a0a0a0; box-shadow: inset 0 1px #fff; font: 11px/16px "Liberation Sans", Arial, sans-serif; }
.band { display: flex; align-items: center; flex: none; overflow: hidden; border-right: 1px solid #a0a0a0; box-shadow: inset 1px 1px #fff; }
.band0 { width: 395px; } .band1 { width: 216px; } .band2 { width: 449px; } .band3 { width: 888px; } .band4 { width: 256px; }
.grow { flex: 1; border-right: 0; }
.grip { flex: 0 0 15px; height: 24px; background: linear-gradient(#a0a0a0, #a0a0a0) 4px 0 / 1px 24px no-repeat, linear-gradient(#fff, #fff) 3px 0 / 1px 24px no-repeat; }
.band3 .grip { flex-basis: 14px; }
.sep { flex: 0 0 8px; height: 24px; background: linear-gradient(#a0a0a0, #a0a0a0) 4px 0 / 1px 24px no-repeat, linear-gradient(#fff, #fff) 5px 0 / 1px 24px no-repeat; }
.slot { width: 23px; display: flex; justify-content: center; }
.lbl { padding-right: 6px; }
.tool:disabled .lbl { color: #a0a0a0; font-weight: bold; text-shadow: 1px 1px #fff; padding-right: 4px; }
.mid .slot { width: 20px; }
.slim .slot { width: 14px; }
.band0 .slim .slot { width: 17px; }
.on { border: 1px solid #606060; border-radius: 3px; background: linear-gradient(#dcdcdc, #ececec); }
.tool.on { width: 24px; height: 22px; }
.tool.on .slot { width: 22px; }
.more { margin-left: auto; align-self: flex-start; font: bold 14px/16px "Liberation Sans", Arial, sans-serif; padding-right: 5px; }
.cutlbl { padding-left: 2px; font-weight: bold; color: #888; }
.search { flex: 1; min-width: 0; display: flex; align-items: center; height: 24px; margin-right: 1px; background: #fff; border: 1px solid #e2e6ee; }
.search input { flex: 1; min-width: 0; border: 0; outline: 0; padding: 0 0 0 3px; background: none; font: 11px/16px "Liberation Sans", Arial, sans-serif; }
.search input::placeholder { color: #606060; opacity: 1; }
.combo { flex: none; display: flex; align-items: center; height: 22px; border: 1px solid #b0b0b0; border-radius: 2px; background: #f4f4f4; }
.combo select { flex: 1; min-width: 0; height: 18px; margin-left: 2px; appearance: none; border: 0; background: none; }
.mid-combo { width: 150px; background: #fff; }
.mid-combo select { border: 1px solid #ececec; }

.options { flex: 0 0 32px; display: flex; align-items: center; padding: 0 0 4px 4px; box-shadow: inset 0 1px #fff; }
.type-combo { width: 198px; margin-right: 6px; }
.raised { width: 33px; height: 22px; justify-content: center; border: 1px solid #fff; border-right-color: #808080; border-bottom-color: #808080; box-shadow: 1px 1px #c0c0c0; margin-right: 8px; }
.raised.thin { width: 29px; margin: 0 0 0 8px; }
.check { display: flex; align-items: center; gap: 2px; padding-left: 4px; font-size: 11px; }
.check input { appearance: none; width: 13px; height: 13px; margin: 0; border: 1px solid #8e8f8f; background: #e4eaf4; display: grid; place-items: center; }
.check input:checked::before { content: ""; width: 4px; height: 8px; border: solid #2a3f8c; border-width: 0 2px 2px 0; transform: rotate(40deg); }

.body { flex: 1; min-height: 0; display: flex; }
.design { flex: 0 0 98px; display: flex; flex-direction: column; border-left: 2px solid #909090; padding-top: 1px; }
.tab { height: 20px; justify-content: center; padding-right: 3px; border: solid #000; border-width: 0 1px 1px 0; box-shadow: inset 0 1px #fff, inset 1px 0 #fff; }
.first { margin-bottom: 1px; }
.item { height: 22px; gap: 4px; padding-left: 3px; }
.item:disabled { color: #a0a0a0; }
.item.on { height: 20px; width: 91px; margin-top: 1px; padding-left: 3px; border-color: #707070; }
.tabs { margin-top: auto; padding-bottom: 3px; display: flex; flex-direction: column; }

.browser { flex: 0 0 149px; width: 149px; min-width: 0; margin: 1px 0 0 7px; display: flex; flex-direction: column; border-left: 2px solid #6c6c6c; border-right: 2px solid #d4e0ee; box-shadow: -3px 0 #fafafa, 3px 0 #fafafa; background: #dce6f2; min-height: 0; }
.browser-head { flex: 0 0 20px; display: flex; align-items: center; padding: 0 1px 0 3px; background: linear-gradient(#bccbdb, #d4e0ee); color: #4c5560; }
.browser-head span { flex: 1; white-space: nowrap; overflow: hidden; }
.browser-head button { width: 13px; height: 13px; justify-content: center; border: 1px solid #7c8a9c; border-radius: 2px; overflow: hidden; }
.browser-head .ico { width: 11px; height: 11px; }
.browser-body { flex: 1; min-height: 0; display: flex; margin-left: 3px; background: #fff; border-top: 1px solid #606870; }
.tree { flex: 1; min-width: 0; margin: 0; padding: 0; list-style: none; overflow: hidden; font: 11px/16px "Liberation Sans", Arial, sans-serif; }
.tree li { display: flex; height: 16px; white-space: nowrap; }
.tree svg { flex: none; }
.tree .iconic { margin-left: 4px; padding: 0 3px 0 2px; }
.sel .iconic { background: #e8e8e8; }

.vscroll, .hscroll { display: flex; align-items: center; background: #efefef; }
.vscroll { flex-direction: column; width: 16px; }
.vscroll i, .hscroll i { flex: 1; }
.vscroll b, .hscroll b { width: 15px; height: 15px; border: 1px solid #989898; border-radius: 2px; background: linear-gradient(#f8f8f8 45%, #d4d4d4 55%, #e0e0e0); }
.vscroll .ico, .hscroll .ico { padding: 1px; }
.vscroll b { background: linear-gradient(90deg, #f8f8f8 45%, #dcdcdc 55%, #d0d0d0); }
.tall { flex: none; width: 15px; }
.tall b { flex: 100 0 0; background: linear-gradient(#505050, #505050) 50% calc(50% - 3px) / 6px 1px no-repeat, linear-gradient(#505050, #505050) 50% 50% / 6px 1px no-repeat, linear-gradient(#505050, #505050) 50% calc(50% + 3px) / 6px 1px no-repeat, linear-gradient(90deg, #f8f8f8 45%, #dcdcdc 55%, #c8c8c8); }
.tall .before { flex: 0 0 2px; }
.tall .after { flex: 8 0 0; }

.mdi { flex: 1; min-width: 0; margin: 1px 0 0 8px; display: flex; gap: 2px; overflow: hidden; background: #a8a8a8; border: solid #7c7c7c; border-width: 1px 0 0 1px; }
.column { display: flex; flex-direction: column; gap: 2px; min-height: 0; }
.column0 { flex: 0 0 491px; }
.column1 { flex: 1; min-width: 0; margin-right: -16px; }
.win { flex: 1 1 0; min-height: 0; display: flex; flex-direction: column; padding: 0 8px 8px; background: #d7e4f2; border: 1px solid #484848; border-radius: 6px 6px 0 0; overflow: hidden; box-shadow: inset 1px 1px #eef4fa; }
.win-head { flex: 0 0 27px; display: flex; align-items: center; gap: 2px; margin: 0 -8px; padding: 4px 9px 0 9px; background: linear-gradient(#bccad8, #d4e1ef); color: #4a525c; }
.win-head h2 { flex: 1; min-width: 0; margin: 0 0 0 2px; font: inherit; white-space: nowrap; overflow: hidden; }
.win-head button { width: 28px; height: 15px; justify-content: center; border: 1px solid #8494b0; border-radius: 3px; background: linear-gradient(#ccd8e6, #dce6f2); overflow: hidden; }
.client { flex: 1; min-height: 0; display: grid; grid-template: minmax(0, 1fr) 18px / minmax(0, 1fr) 16px; border: 1px solid #707070; border-right-color: #fff; border-bottom-color: #fff; background: #f0f0f0; }
.canvas { background: #fff; overflow: hidden; }
.drawing { display: block; width: 100%; height: 100%; }
.viewbar { grid-column: 1 / 3; display: flex; align-items: center; font-size: 11px; }
.scale { flex: 0 0 78px; padding-left: 25px; }
.viewbar button { width: 21px; justify-content: center; }
.hscroll { flex: 1; height: 16px; margin-right: 2px; }
.dock { flex: 0 0 7px; min-height: 0; }
.docked { width: 160px; height: 28px; margin: 0; padding: 3px 4px 0; border: 1px solid #484848; border-radius: 6px 6px 0 0; }
.face { font: bold 12px "Open Sans", sans-serif; fill: #3c6c48; }
.wheel-text { fill: #868686; stroke: none; text-anchor: middle; font: 600 10px "Open Sans", sans-serif; }
.small { font-size: 8px; }
</style>
